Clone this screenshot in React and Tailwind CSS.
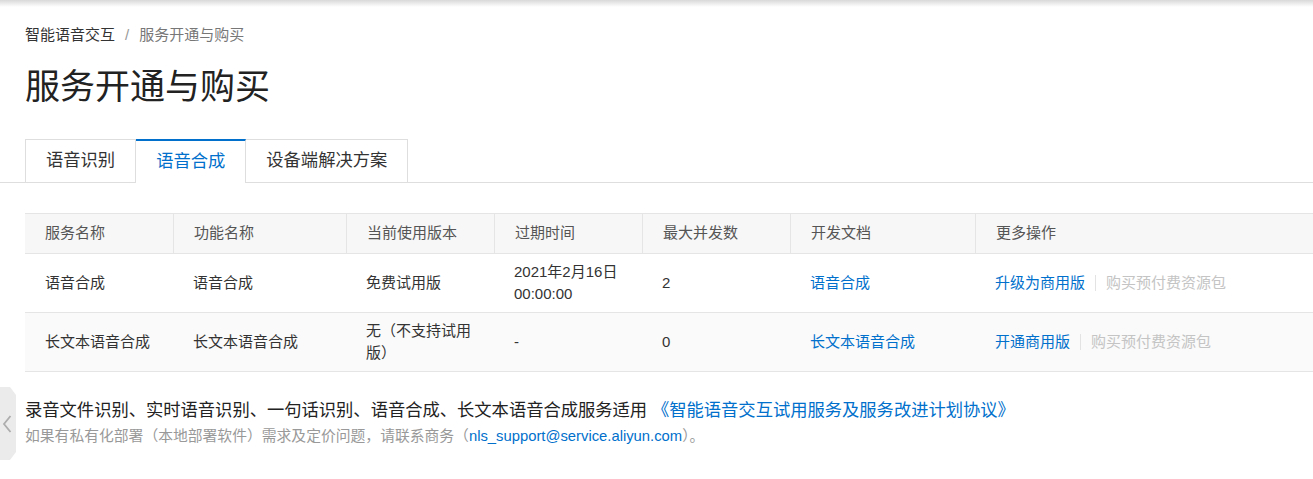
import React from 'react';

const font = { fontFamily: '"Liberation Sans", "Noto Sans CJK SC", sans-serif' };

const columns = ['服务名称', '功能名称', '当前使用版本', '过期时间', '最大并发数', '开发文档', '更多操作'];

const rows = [
    {
        service: '语音合成',
        feature: '语音合成',
        version: '免费试用版',
        expire: (<>2021年2月16日<br />00:00:00</>),
        max: '2',
        doc: '语音合成',
        action: '升级为商用版',
        bg: 'bg-white',
    },
    {
        service: '长文本语音合成',
        feature: '长文本语音合成',
        version: '无（不支持试用版）',
        expire: '-',
        max: '0',
        doc: '长文本语音合成',
        action: '开通商用版',
        bg: 'bg-[#fafafa]',
    },
];

const gridCols = 'grid grid-cols-[148px_173px_148px_148px_148px_185px_1fr]';

const App = () => {
    const tabs = ['语音识别', '语音合成', '设备端解决方案'];
    const active = 1;

    return (
        <div className="relative min-h-[479px] bg-white text-[#333] overflow-hidden" style={font}>
            <div className="h-[7px] bg-gradient-to-b from-[#d9d9d9] to-white"></div>

            <div className="pl-[25px] mt-[18px] text-[15px] leading-[20px] flex items-center">
                <span className="text-[#333]">智能语音交互</span>
                <span className="mx-[10px] text-[#999]">/</span>
                <span className="text-[#777]">服务开通与购买</span>
            </div>

            <h1 className="pl-[25px] mt-[22px] text-[35px] leading-[40px] font-normal text-[#222]">服务开通与购买</h1>

            <div className="mt-[32px] flex pl-[25px] border-b border-[#dedede]">
                {tabs.map((t, i) => (
                    <div
                        key={t}
                        className={
                            i === active
                                ? 'h-[44px] -mb-px px-5 flex items-center text-[17.3px] text-[#0070cc] bg-white border-t-2 border-t-[#0070cc] border-r border-[#dedede]'
                                : `h-[44px] -mb-px px-5 flex items-center text-[17.3px] text-[#333] bg-white border-t border-r border-b border-[#dedede] ${i === 0 ? 'border-l' : ''}`
                        }
                    >
                        <span className={i === active ? '-mt-[1px]' : ''}>{t}</span>
                    </div>
                ))}
            </div>

            <div className="mt-[30px] pl-[25px] text-[15px]">
                <div className={`${gridCols} h-[41px] bg-[#f7f7f7] border-y border-[#e5e5e5] text-[#555]`}>
                    {columns.map((c, i) => (
                        <div key={c} className={`px-5 flex items-center ${i > 0 ? 'border-l border-[#e5e5e5]' : ''}`}>
                            {c}
                        </div>
                    ))}
                </div>
                {rows.map((r) => (
                    <div key={r.service} className={`${gridCols} h-[59px] border-b border-[#e5e5e5] ${r.bg} leading-[22px]`}>
                        <div className="px-5 flex items-center">{r.service}</div>
                        <div className="px-5 flex items-center">{r.feature}</div>
                        <div className="px-5 flex items-center">{r.version}</div>
                        <div className="px-5 flex items-center">{r.expire}</div>
                        <div className="px-5 flex items-center">{r.max}</div>
                        <div className="px-5 flex items-center text-[#0070cc]">{r.doc}</div>
                        <div className="px-5 flex items-center">
                            <span className="text-[#0070cc]">{r.action}</span>
                            <span className="mx-[10px] w-px h-[16px] bg-[#e3e3e3]"></span>
                            <span className="text-[#c4c4c4]">购买预付费资源包</span>
                        </div>
                    </div>
                ))}
            </div>

            <div className="pl-[25px] mt-[26px]">
                <p className="text-[17.3px] leading-[24px] text-[#222]">
                    录音文件识别、实时语音识别、一句话识别、语音合成、长文本语音合成服务适用{' '}
                    <span className="text-[#0070cc]">《智能语音交互试用服务及服务改进计划协议》</span>
                </p>
                <p className="mt-[3px] text-[14.8px] leading-[22px] text-[#999]">
                    如果有私有化部署（本地部署软件）需求及定价问题，请联系商务（<span className="text-[#0070cc]">nls_support@service.aliyun.com</span>）。
                </p>
            </div>

            <div className="absolute left-0 top-[387px] w-[16px] h-[73px]">
                <svg width="16" height="73" viewBox="0 0 16 73">
                    <polygon points="0,0 10,0 16,8 16,65 10,73 0,73" fill="#ebebeb" />
                    <polyline points="10.5,29 4,37 10.5,45" fill="none" stroke="#adadad" strokeWidth="1.8" />
                </svg>
            </div>
        </div>
    );
};

export default App;
